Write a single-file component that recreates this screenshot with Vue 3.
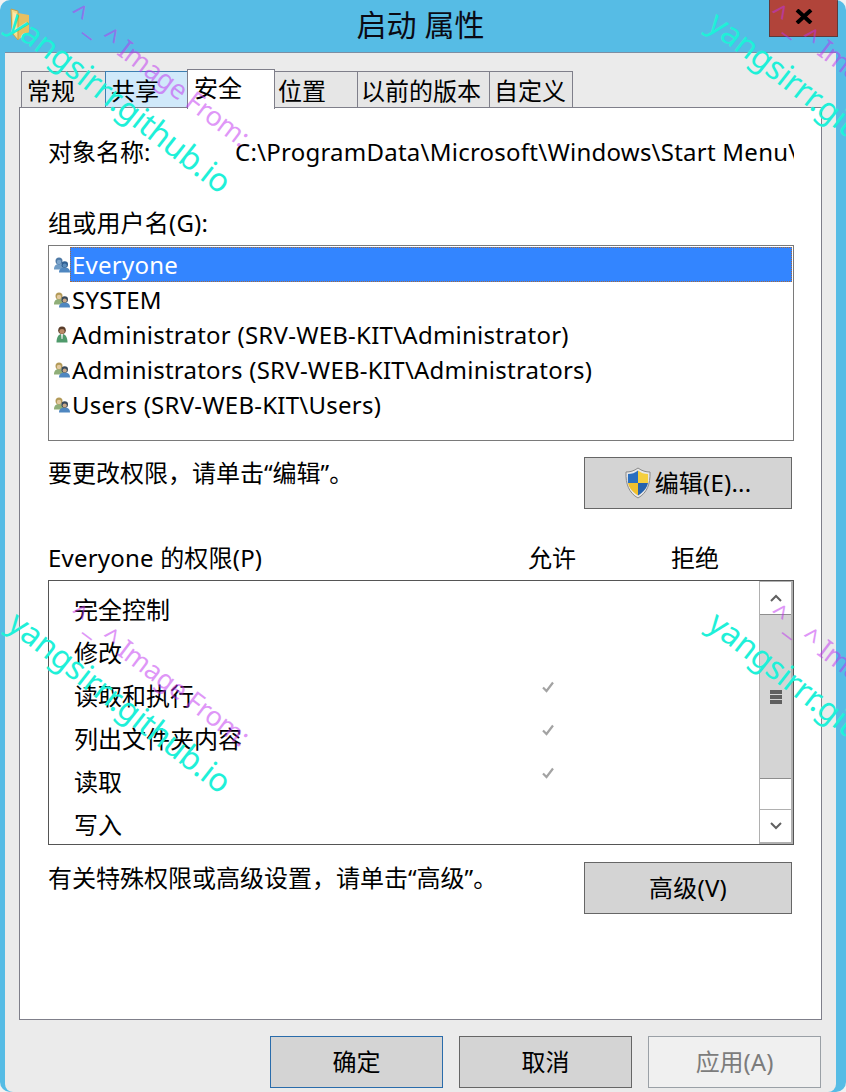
<template>
  <div class="window">
    <div class="titlebar">
      <svg class="folder" width="22" height="34" viewBox="0 0 22 34">
        <path d="M9 5 L20 7 L20 24 L9 32 Z" fill="#e6bf62" />
        <path d="M2 1 L9 3 L9 32 L3 25 Z" fill="#f6da88" stroke="#c2a04c" stroke-width="1" />
        <path d="M4 4 L7.5 5.5 L7.5 27 L4 23 Z" fill="#fbe9a8" />
      </svg>
      <div class="title">启动 属性</div>
      <div class="close">
        <svg width="18" height="15" viewBox="0 0 18 15">
          <path d="M2 1 L16 14 M16 1 L2 14" stroke="#000" stroke-width="4" />
        </svg>
      </div>
    </div>

    <div class="client">
      <div class="tabs">
        <div
          v-for="tab in tabs"
          :key="tab.name"
          class="tab"
          :class="{ active: tab.name === '安全', hover: tab.name === '共享' }"
          :style="{ width: tab.width + 'px', paddingLeft: tab.pad + 'px' }"
        >{{ tab.name }}</div>
      </div>

      <div class="panel">
        <div class="object-row">
          <span class="object-label">对象名称:</span>
          <span class="object-path">C:\ProgramData\Microsoft\Windows\Start Menu\Programs\Startup</span>
        </div>

        <div class="group-label">组或用户名(G):</div>
        <div class="user-list">
          <div v-for="(user, i) in users" :key="user.name" class="user-row">
            <svg v-if="user.single" class="user-icon" width="16" height="20" viewBox="0 0 16 20">
              <path d="M2.5 17.5 C2.5 11.5 5 9 8 9 C11 9 13.5 11.5 13.5 17.5 Z" fill="#4f9a6b" />
              <path d="M7 9 L9 9 L8.5 14 L7.5 14 Z" fill="#e8e8e8" />
              <circle cx="8" cy="5.2" r="3.8" fill="#5a3d2a" />
              <ellipse cx="8" cy="6.4" rx="2.6" ry="2.4" fill="#b98a66" />
            </svg>
            <svg v-else class="user-icon" width="16" height="20" viewBox="0 0 16 20">
              <path d="M0 14.5 C0 10.5 2 9 5 9 C8 9 10 10.5 10 14.5 Z" :fill="i === 0 ? '#6f9cc6' : '#8fae78'" />
              <circle cx="5" cy="6" r="3.5" :fill="i === 0 ? '#4f7aa6' : '#b39a58'" />
              <ellipse cx="5" cy="7" rx="2.2" ry="2.3" :fill="i === 0 ? '#7ea6cc' : '#e2c9a0'" />
              <path d="M5 17.5 C5 14 7.2 12.5 10.7 12.5 C14.2 12.5 16 14 16 17.5 Z" fill="#4f87c0" />
              <circle cx="10.7" cy="9.6" r="3.3" :fill="i === 0 ? '#2f5f92' : '#39495a'" />
              <ellipse cx="10.7" cy="10.5" rx="2.1" ry="2.1" :fill="i === 0 ? '#5a8cbc' : '#c9a888'" />
            </svg>
            <span class="user-name" :class="{ selected: i === 0 }">{{ user.name }}</span>
          </div>
        </div>

        <div class="action-row">
          <span class="hint">要更改权限，请单击“编辑”。</span>
          <div class="btn action-btn">
            <svg class="shield" width="26" height="32" viewBox="0 0 26 32">
              <path d="M13 1 C17 4 21 5 25 5 C25.5 17 22 26 13 31 C4 26 .5 17 1 5 C5 5 9 4 13 1 Z" fill="#e8e8e8" stroke="#8a8a8a" stroke-width="1" />
              <path d="M13 3.5 L13 16 L3 16 C2.8 12 3 9 3 7 C7 7 10 6 13 3.5 Z" fill="#2a6fc0" />
              <path d="M13 3.5 C16 6 19 7 23 7 C23 9 23.2 12 23 16 L13 16 Z" fill="#f5cf3e" />
              <path d="M3 16 L13 16 L13 28.5 C7.5 25 4 21 3 16 Z" fill="#f0c02e" />
              <path d="M13 16 L23 16 C22 21 18.5 25 13 28.5 Z" fill="#2562ae" />
            </svg>
            <span class="latin">编辑(E)...</span>
          </div>
        </div>

        <div class="perm-head">
          <span class="perm-title latin">Everyone 的权限(P)</span>
          <span class="perm-allow">允许</span>
          <span class="perm-deny">拒绝</span>
        </div>

        <div class="perm-list">
          <div class="perm-rows">
            <div v-for="perm in perms" :key="perm.name" class="perm-row">
              <span class="perm-name">{{ perm.name }}</span>
              <svg v-if="perm.allow" class="check" width="14" height="14" viewBox="0 0 14 14">
                <path d="M2 7.5 L5.5 11 L12 2.5" fill="none" stroke="#a3a3a3" stroke-width="2.2" />
              </svg>
            </div>
          </div>
          <div class="scrollbar">
            <div class="scroll-btn">
              <svg width="12" height="8" viewBox="0 0 12 8"><path d="M1 7 L6 2 L11 7" fill="none" stroke="#606060" stroke-width="2" /></svg>
            </div>
            <div class="scroll-thumb">
              <span></span><span></span><span></span>
            </div>
            <div class="scroll-track"></div>
            <div class="scroll-btn down">
              <svg width="12" height="8" viewBox="0 0 12 8"><path d="M1 1 L6 6 L11 1" fill="none" stroke="#606060" stroke-width="2" /></svg>
            </div>
          </div>
        </div>

        <div class="action-row advanced">
          <span class="hint">有关特殊权限或高级设置，请单击“高级”。</span>
          <div class="btn action-btn latin">高级(V)</div>
        </div>
      </div>

      <div class="footer">
        <div class="btn foot-btn primary">确定</div>
        <div class="btn foot-btn">取消</div>
        <div class="btn foot-btn disabled">应用(A)</div>
      </div>
    </div>

    <div class="marks">
      <template v-for="m in marks" :key="m.x + '-' + m.y">
        <span class="mark-purple" :style="{ left: m.x + 73 + 'px', top: m.y - 11 + 'px' }">^ _ ^ Image From:</span>
        <span class="mark-cyan" :style="{ left: m.x + 13 + 'px', top: m.y - 2 + 'px' }">yangsirrr.github.io</span>
      </template>
    </div>
  </div>
</template>

<script setup>
const tabs = [
  { name: '常规', width: 85, pad: 5 },
  { name: '共享', width: 83, pad: 5 },
  { name: '安全', width: 88, pad: 6 },
  { name: '位置', width: 84, pad: 3 },
  { name: '以前的版本', width: 133, pad: 3 },
  { name: '自定义', width: 84, pad: 4 }
]

const users = [
  { name: 'Everyone' },
  { name: 'SYSTEM' },
  { name: 'Administrator (SRV-WEB-KIT\\Administrator)', single: true },
  { name: 'Administrators (SRV-WEB-KIT\\Administrators)' },
  { name: 'Users (SRV-WEB-KIT\\Users)' }
]

const perms = [
  { name: '完全控制' },
  { name: '修改' },
  { name: '读取和执行', allow: true },
  { name: '列出文件夹内容', allow: true },
  { name: '读取', allow: true },
  { name: '写入' }
]

const marks = [
  { x: 0, y: 0 },
  { x: 700, y: 0 },
  { x: 0, y: 600 },
  { x: 700, y: 600 }
]
</script>

<style>
html, body {
  margin: 0;
  background: #f2f2f2;
}
</style>

<style scoped>
.window {
  position: relative;
  width: 846px;
  height: 1092px;
  background: #56bce5;
  border-radius: 10px;
  overflow: hidden;
  display: flex;
  flex-direction: column;
  color: #000;
  font-family: "Noto Sans", "Noto Sans CJK SC", sans-serif;
  font-size: 24px;
}

.titlebar {
  height: 52px;
  flex: none;
  display: flex;
  align-items: flex-start;
}

.folder {
  margin: 8px 0 0 9px;
  flex: none;
}

.title {
  flex: 1;
  padding-left: 41px;
  text-align: center;
  font-size: 30px;
  line-height: 50px;
  color: #0a0a14;
}

.close {
  width: 69px;
  height: 37px;
  box-sizing: border-box;
  margin-right: 8px;
  background: #b1443b;
  border: 1px solid #5e3a3a;
  border-top: none;
  display: flex;
  align-items: center;
  justify-content: center;
  padding-bottom: 4px;
}

.client {
  flex: 1;
  margin: 0 10px 0 5px;
  padding: 18px 14px 0;
  background: #ebebeb;
  border-top: 1px solid #7d8ea3;
  border-radius: 0 0 8px 8px;
  min-height: 0;
}

.tabs {
  display: flex;
  height: 36px;
  padding-left: 2px;
}

.tab {
  box-sizing: border-box;
  height: 36px;
  flex: none;
  line-height: 38px;
  white-space: nowrap;
  background: #e6e6e6;
  border: 1px solid #7f7f8a;
  border-bottom: none;
  margin-right: -1px;
}

.tab.hover {
  background: #d0e9fa;
  border-color: #3c7fb1;
  position: relative;
  z-index: 1;
}

.tab.active {
  position: relative;
  z-index: 2;
  height: 40px;
  margin-top: -2px;
  background: #fff;
  line-height: 36px;
}

.panel {
  box-sizing: border-box;
  height: 913px;
  padding: 0 27px 0 28px;
  background: #fff;
  border: 1px solid #7f7f8a;
  overflow: hidden;
}

.latin {
  letter-spacing: 0.2px;
}

.object-row {
  display: flex;
  margin-top: 29px;
  height: 30px;
  line-height: 30px;
  overflow: hidden;
}

.object-label {
  width: 187px;
  flex: none;
}

.object-path {
  white-space: nowrap;
  letter-spacing: 0.24px;
}

.group-label {
  margin-top: 41px;
  height: 30px;
  line-height: 30px;
  letter-spacing: 0.2px;
}

.user-list {
  box-sizing: border-box;
  margin-top: 7px;
  height: 196px;
  padding: 1px;
  border: 1px solid #7a7a7a;
}

.user-row {
  height: 35px;
  display: flex;
  align-items: center;
}

.user-icon {
  margin-left: 4px;
  flex: none;
}

.user-name {
  flex: 1;
  height: 35px;
  line-height: 35px;
  padding-left: 2px;
  white-space: nowrap;
  letter-spacing: 0.24px;
}

.user-name.selected {
  background: #3385ff;
  color: #fff;
  outline: 1px dotted #a86a3a;
  outline-offset: -1px;
}

.action-row {
  display: flex;
  justify-content: space-between;
  margin-top: 16px;
}

.action-row.advanced {
  margin-top: 17px;
}

.hint {
  line-height: 32px;
}

.btn {
  box-sizing: border-box;
  display: flex;
  align-items: center;
  justify-content: center;
  padding-bottom: 3px;
  background: #d4d4d4;
  border: 1px solid #666;
}

.action-btn {
  width: 208px;
  height: 52px;
  margin-right: 2px;
}

.shield {
  margin: 3px 4px 0 0;
}

.perm-head {
  margin-top: 34px;
  height: 30px;
  line-height: 30px;
  display: flex;
}

.perm-title {
  width: 480px;
  flex: none;
}

.perm-allow {
  width: 143px;
  flex: none;
}

.perm-list {
  box-sizing: border-box;
  margin-top: 7px;
  height: 265px;
  display: flex;
  border: 1px solid #555;
  overflow: hidden;
}

.perm-rows {
  flex: 1;
  padding-top: 6px;
  overflow: hidden;
}

.perm-row {
  height: 43px;
  display: flex;
  align-items: center;
}

.perm-name {
  width: 467px;
  padding-left: 25px;
  flex: none;
}

.check {
  margin-top: -16px;
}

.scrollbar {
  box-sizing: border-box;
  width: 34px;
  flex: none;
  display: flex;
  flex-direction: column;
  border: 1px solid #b0b0b0;
  border-width: 1px 2px 2px 1px;
}

.scroll-btn {
  height: 33px;
  flex: none;
  display: flex;
  align-items: center;
  justify-content: center;
  padding-left: 1px;
  border-bottom: 1px solid #8e8e8e;
  box-sizing: border-box;
}

.scroll-btn.down {
  border-bottom: none;
  border-top: 1px solid #b0b0b0;
}

.scroll-thumb {
  height: 164px;
  flex: none;
  box-sizing: border-box;
  padding-left: 1px;
  background: #d4d4d4;
  border-bottom: 1px solid #8e8e8e;
  display: flex;
  flex-direction: column;
  align-items: center;
  justify-content: center;
  gap: 1px;
}

.scroll-thumb span {
  width: 12px;
  height: 4px;
  background: #5f5f5f;
}

.scroll-track {
  flex: 1;
}

.footer {
  display: flex;
  justify-content: flex-end;
  gap: 16px;
  margin-top: 16px;
  padding-right: 1px;
}

.foot-btn {
  width: 173px;
  height: 52px;
}

.foot-btn.primary {
  border-color: #2a6cab;
}

.foot-btn.disabled {
  background: #f0f0f0;
  border-color: #9aa0a6;
  color: #7c7c7c;
}

.marks {
  position: absolute;
  inset: 0;
  z-index: 5;
  overflow: hidden;
  pointer-events: none;
}

.mark-cyan,
.mark-purple {
  position: absolute;
  white-space: nowrap;
  transform-origin: 0 50%;
  line-height: 40px;
  transform: rotate(37deg);
}

.mark-cyan {
  font-size: 32.5px;
  letter-spacing: -0.4px;
  color: #1ff0d8;
  transform: rotate(38deg);
}

.mark-purple {
  font-size: 27px;
  letter-spacing: -0.5px;
  color: rgb(192, 48, 240);
  opacity: 0.5;
}
</style>
